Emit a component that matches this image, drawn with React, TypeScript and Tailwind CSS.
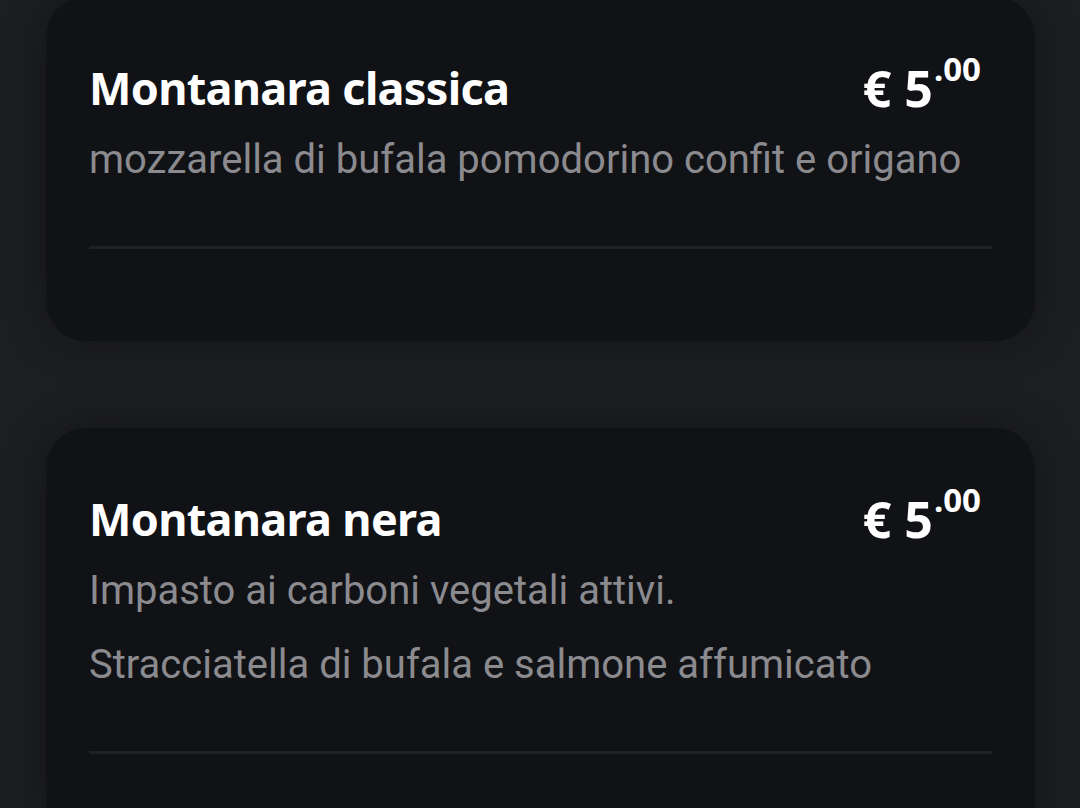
const ITEMS = [
  {
    name: 'Montanara classica',
    price: '5',
    cents: '00',
    lines: ['mozzarella di bufala pomodorino confit e origano']
  },
  {
    name: 'Montanara nera',
    price: '5',
    cents: '00',
    lines: [
      'Impasto ai carboni vegetali attivi.',
      'Stracciatella di bufala e salmone affumicato'
    ]
  }
]

function MenuCard({ item }: { item: (typeof ITEMS)[number] }) {
  return (
    <div className="rounded-[40px] bg-[#111216] px-[43px] pt-[56px] pb-[92px] shadow-[0_0_40px_rgba(0,0,0,0.35)]">
      <div className="flex items-start justify-between">
        <h2 className="text-[45px] font-bold leading-[70px] tracking-[-0.7px] text-white [font-family:'Noto_Sans',sans-serif]">
          {item.name}
        </h2>
        <div className="mr-[11px] flex items-start text-white font-bold [font-family:'Noto_Sans',sans-serif]">
          <span className="text-[50px] leading-[70px]">€ {item.price}</span>
          <span className="mt-[-9px] ml-[1px] text-[33px] leading-[50px]">.{item.cents}</span>
        </div>
      </div>
      <div className="mt-[13px] flex flex-col gap-[26px] pb-[62px]">
        {item.lines.map((line) => (
          <p
            key={line}
            className="text-[40px] leading-[48px] text-[#8b8b8f] [font-family:Roboto,sans-serif]"
          >
            {line}
          </p>
        ))}
      </div>
      <div className="h-[3px] bg-[#202125]" />
    </div>
  )
}

export default function App() {
  return (
    <div className="min-h-[808px] overflow-hidden bg-[#1d1e22]">
      <div className="mt-[-3px] flex flex-col gap-[87px] pl-[46px] pr-[45px]">
        {ITEMS.map((item) => (
          <MenuCard key={item.name} item={item} />
        ))}
      </div>
    </div>
  )
}
